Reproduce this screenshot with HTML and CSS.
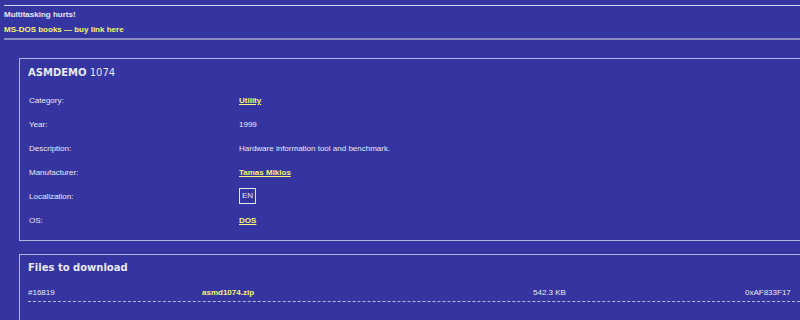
FILE: index.html
```html
<!DOCTYPE html>
<html lang="en">
<head>
    <meta charset="UTF-8">
    <meta name="viewport" content="width=device-width, initial-scale=1.0">
    <title>ASMDEMO 1074</title>
    <link rel="stylesheet" href="styles.css">
</head>
<body>
    <header class="top">
        <hr class="line-top">
        <p class="motto">Multitasking hurts!</p>
        <p class="promo"><a href="#">MS-DOS books &mdash; buy link here</a></p>
        <hr class="line-bottom">
    </header>

    <section class="box">
        <h2 class="title"><b>ASMDEMO</b> 1074</h2>
        <div class="info">
            <div class="label">Category:</div>
            <div class="value"><a class="link" href="#">Utility</a></div>
            <div class="label">Year:</div>
            <div class="value">1999</div>
            <div class="label">Description:</div>
            <div class="value">Hardware information tool and benchmark.</div>
            <div class="label">Manufacturer:</div>
            <div class="value"><a class="link" href="#">Tamas Miklos</a></div>
            <div class="label">Localization:</div>
            <div class="value"><span class="lang">EN</span></div>
            <div class="label">OS:</div>
            <div class="value"><a class="link" href="#">DOS</a></div>
        </div>
    </section>

    <section class="box files">
        <h2 class="title"><b>Files to download</b></h2>
        <div class="file-row">
            <span>#16819</span>
            <a class="file" href="#">asmd1074.zip</a>
            <span>542.3 KB</span>
            <span>0xAF833F17</span>
        </div>
    </section>
</body>
</html>
```

FILE: styles.css
```css
html, body {
    overflow-x: hidden;
}

body {
    margin: 0;
    background: #3535a1;
    color: #e8e8f4;
    font-family: "Liberation Sans", Arial, sans-serif;
    font-size: 8px;
}

a {
    color: #f6f66c;
    font-weight: bold;
    text-decoration: none;
}

.top {
    padding-left: 4px;
}

.line-top {
    margin: 5px 0 0;
    border: 0;
    height: 1px;
    background: #d4d4ec;
}

.motto, .promo {
    margin: 0;
    line-height: 15px;
    font-weight: bold;
}

.motto {
    margin-top: 1px;
}

.line-bottom {
    margin: 1px 0 0;
    border: 0;
    height: 2px;
    background: #8c8cc4;
}

.box {
    margin: 18px -40px 0 19px;
    border: 1px solid #b4b4dc;
    padding: 6px 9px 8px 8px;
}

.title {
    margin: 0;
    font-family: "DejaVu Sans", Verdana, sans-serif;
    font-size: 10px;
    font-weight: normal;
    line-height: 16px;
}

.info {
    display: grid;
    grid-template-columns: 210px 1fr;
    grid-auto-rows: 24px;
    margin-top: 7px;
    padding-left: 1px;
}

.label, .value {
    display: flex;
    align-items: center;
}

.link {
    text-decoration: underline;
}

.lang {
    border: 1px solid #e8e8f4;
    padding: 2px 2px;
    line-height: 10px;
    font-size: 8px;
}

.files {
    margin-top: 13px;
    padding-top: 5px;
    min-height: 60px;
}

.file-row {
    display: grid;
    grid-template-columns: 174px 331px 212px 1fr;
    margin-top: 9px;
    line-height: 16px;
    border-bottom: 1px dashed #b8b8dc;
}
```
